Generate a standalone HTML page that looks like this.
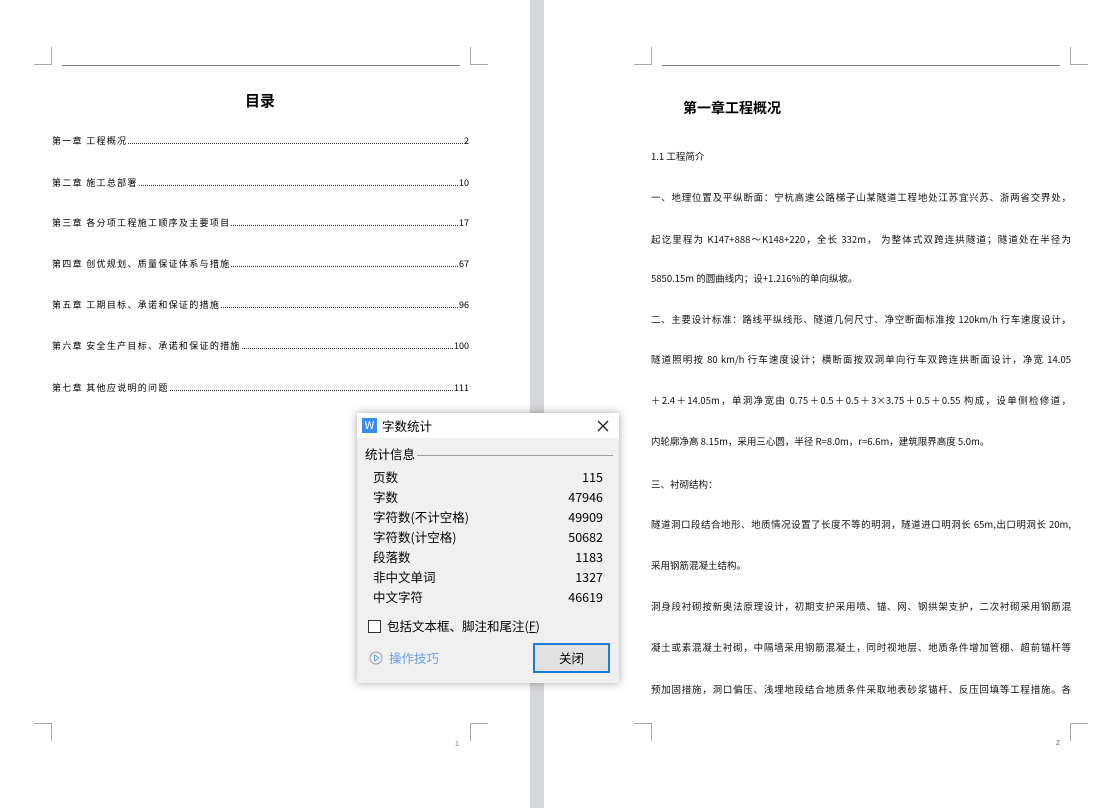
<!DOCTYPE html>
<html><head><meta charset="utf-8"><style>
*{margin:0;padding:0;box-sizing:border-box}
body{width:1105px;height:808px;background:#fff;position:relative;overflow:hidden;font-family:"Liberation Sans","Noto Sans CJK SC",sans-serif;color:#000}
.a{position:absolute}
.gut{left:530px;top:0;width:14px;height:808px;background:#d6d7d9}
.v{position:absolute;width:1px;background:#a8a8a8}
.h{position:absolute;height:1px;background:#a8a8a8}
.toc{position:absolute;left:52px;width:417px;font-size:9px;display:flex;align-items:flex-end;font-family:"Noto Sans CJK SC",sans-serif;line-height:12px}
.toc b{font-weight:normal;letter-spacing:1.3px}
.toc .d{flex:1;border-bottom:1px dotted #333;margin:0 1px 3px}
.ln{position:absolute;left:651px;width:420px;font-size:9.5px;font-family:"Noto Sans CJK SC",sans-serif;line-height:12px;white-space:nowrap;text-align:justify;text-align-last:justify;color:#111}
.nl{text-align-last:left}
.dlg{left:357px;top:413px;width:262px;height:270px;background:#f0f0f0;box-shadow:0 0 8px rgba(0,0,0,.35);font-size:12.5px;font-family:"Noto Sans CJK SC",sans-serif}
.row{position:absolute;left:16px;width:230px;display:flex;justify-content:space-between;line-height:16px}
</style></head><body>
<div class="a gut"></div>
<div class="v" style="left:51px;top:47px;height:18px"></div><div class="h" style="left:34px;top:64px;width:18px"></div>
<div class="v" style="left:470px;top:47px;height:18px"></div><div class="h" style="left:470px;top:64px;width:18px"></div>
<div class="h" style="left:62px;top:65px;width:398px;background:#808080"></div>
<div class="h" style="left:34px;top:723px;width:18px"></div><div class="v" style="left:51px;top:723px;height:18px"></div>
<div class="h" style="left:470px;top:723px;width:18px"></div><div class="v" style="left:470px;top:723px;height:18px"></div>
<div class="a" style="left:455px;top:741px;font-size:7px;color:#777">1</div>
<div class="v" style="left:651px;top:47px;height:18px"></div><div class="h" style="left:634px;top:64px;width:18px"></div>
<div class="v" style="left:1070px;top:47px;height:18px"></div><div class="h" style="left:1070px;top:64px;width:18px"></div>
<div class="h" style="left:662px;top:65px;width:398px;background:#808080"></div>
<div class="h" style="left:634px;top:723px;width:18px"></div><div class="v" style="left:651px;top:723px;height:18px"></div>
<div class="h" style="left:1070px;top:723px;width:18px"></div><div class="v" style="left:1070px;top:723px;height:18px"></div>
<div class="a" style="left:1056px;top:740px;font-size:7px;color:#555">2</div>

<div class="a" style="left:245px;top:90px;font-size:15px;font-weight:bold;font-family:'Noto Sans CJK SC',sans-serif">目录</div>
<div class="toc" style="top:135px"><b>第一章 工程概况</b><span class="d"></span>2</div>
<div class="toc" style="top:177px"><b>第二章 施工总部署</b><span class="d"></span>10</div>
<div class="toc" style="top:217px"><b>第三章 各分项工程施工顺序及主要项目</b><span class="d"></span>17</div>
<div class="toc" style="top:258px"><b>第四章 创优规划、质量保证体系与措施</b><span class="d"></span>67</div>
<div class="toc" style="top:299px"><b>第五章 工期目标、承诺和保证的措施</b><span class="d"></span>96</div>
<div class="toc" style="top:340px"><b>第六章 安全生产目标、承诺和保证的措施</b><span class="d"></span>100</div>
<div class="toc" style="top:382px"><b>第七章 其他应说明的问题</b><span class="d"></span>111</div>

<div class="a" style="left:683px;top:98px;font-size:14px;font-weight:bold;font-family:'Noto Sans CJK SC',sans-serif">第一章工程概况</div>
<div class="ln nl" style="top:150px">1.1 工程简介</div>
<div class="ln" style="top:191px">一、地理位置及平纵断面：宁杭高速公路梯子山某隧道工程地处江苏宜兴苏、浙两省交界处，</div>
<div class="ln" style="top:233px">起讫里程为 K147+888～K148+220，全长 332m， 为整体式双跨连拱隧道；隧道处在半径为</div>
<div class="ln nl" style="top:272px">5850.15m 的圆曲线内；设+1.216%的单向纵坡。</div>
<div class="ln" style="top:313px">二、主要设计标准：路线平纵线形、隧道几何尺寸、净空断面标准按 120km/h 行车速度设计，</div>
<div class="ln" style="top:353px">隧道照明按 80 km/h 行车速度设计；横断面按双洞单向行车双跨连拱断面设计，净宽 14.05</div>
<div class="ln" style="top:394px">＋2.4＋14.05m，单洞净宽由 0.75＋0.5＋0.5＋3×3.75＋0.5＋0.55 构成，设单侧检修道，</div>
<div class="ln nl" style="top:435px">内轮廓净高 8.15m，采用三心圆，半径 R=8.0m，r=6.6m，建筑限界高度 5.0m。</div>
<div class="ln nl" style="top:478px">三、衬砌结构：</div>
<div class="ln" style="top:518px">隧道洞口段结合地形、地质情况设置了长度不等的明洞，隧道进口明洞长 65m,出口明洞长 20m,</div>
<div class="ln nl" style="top:559px">采用钢筋混凝土结构。</div>
<div class="ln" style="top:600px">洞身段衬砌按新奥法原理设计，初期支护采用喷、锚、网、钢拱架支护，二次衬砌采用钢筋混</div>
<div class="ln" style="top:641px">凝土或素混凝土衬砌，中隔墙采用钢筋混凝土，同时视地层、地质条件增加管棚、超前锚杆等</div>
<div class="ln" style="top:683px">预加固措施，洞口偏压、浅埋地段结合地质条件采取地表砂浆锚杆、反压回填等工程措施。各</div>

<div class="a dlg">
 <div class="a" style="left:0;top:0;width:262px;height:25px;background:#fff"></div>
 <div class="a" style="left:5px;top:5px;width:15px;height:15px;background:#3b8ded;color:#fff;font-size:11px;line-height:15px;text-align:center">W</div>
 <div class="a" style="left:25px;top:3px;line-height:19px">字数统计</div>
 <svg class="a" style="left:240px;top:7px" width="12" height="12"><path d="M1 1L11 11M11 1L1 11" stroke="#222" stroke-width="1.3"/></svg>
 <div class="a" style="left:8px;top:33px;line-height:16px">统计信息</div>
 <div class="h" style="left:60px;top:42px;width:196px;background:#a0a0a0"></div>
 <div class="row" style="top:56px"><span>页数</span><span>115</span></div>
 <div class="row" style="top:76px"><span>字数</span><span>47946</span></div>
 <div class="row" style="top:96px"><span>字符数(不计空格)</span><span>49909</span></div>
 <div class="row" style="top:116px"><span>字符数(计空格)</span><span>50682</span></div>
 <div class="row" style="top:136px"><span>段落数</span><span>1183</span></div>
 <div class="row" style="top:156px"><span>非中文单词</span><span>1327</span></div>
 <div class="row" style="top:176px"><span>中文字符</span><span>46619</span></div>
 <div class="a" style="left:11px;top:207px;width:13px;height:13px;border:1px solid #333;background:#fff"></div>
 <div class="a" style="left:30px;top:205px;line-height:16px">包括文本框、脚注和尾注(<u>F</u>)</div>
 <svg class="a" style="left:12px;top:238px" width="14" height="14"><circle cx="7" cy="7" r="6" fill="none" stroke="#999"/><path d="M5.5 4v6l4.5-3z" fill="none" stroke="#6a9ee0"/></svg>
 <div class="a" style="left:32px;top:237px;color:#6a9ee0;line-height:16px">操作技巧</div>
 <div class="a" style="left:176px;top:230px;width:77px;height:30px;border:2px solid #1a7bd8;background:#e1e1e1;text-align:center;line-height:26px">关闭</div>
</div>
</body></html>
